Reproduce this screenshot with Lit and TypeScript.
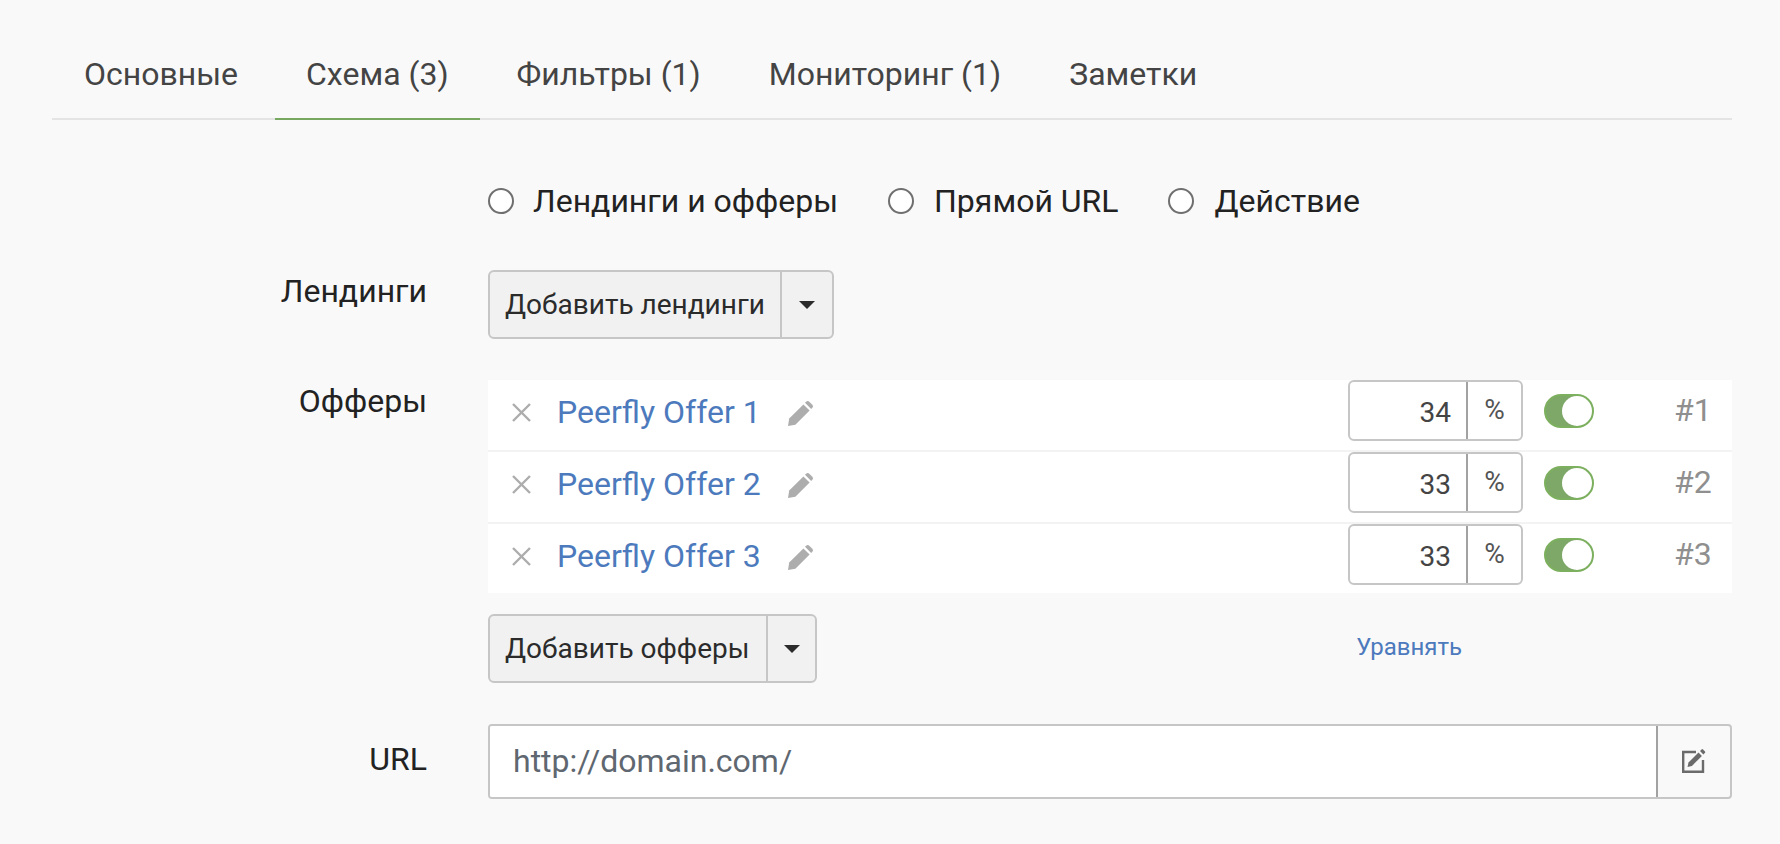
import { LitElement, html, css, svg } from "lit";
import { customElement } from "lit/decorators.js";

const pencil = svg`<path d="M1.2 17.6 15.4 3.4l6.2 6.2L7.4 23.8 0 25z"/><path d="M17 1.8l.9-.9a2.6 2.6 0 0 1 3.6 0l2.6 2.6a2.6 2.6 0 0 1 0 3.6l-.9.9z"/>`;

@customElement("app-root")
export class AppRoot extends LitElement {
  static styles = css`
    :host {
      display: block;
      box-sizing: border-box;
      width: 1780px;
      height: 844px;
      background: #f9f9f9;
      padding: 0 48px 0 52px;
      font-family: Roboto, "Liberation Sans", sans-serif;
      color: #222;
      overflow: hidden;
    }
    .tabs {
      display: flex;
      height: 120px;
      box-sizing: border-box;
      border-bottom: 2px solid #e4e4e4;
      gap: 4px;
    }
    .tab {
      padding: 58px 32px 0;
      height: 120px;
      box-sizing: border-box;
      line-height: 1;
      font-size: 32px;
      color: #444;
      border-bottom: 2px solid transparent;
    }
    .tab.active {
      margin: 0 1px;
      padding: 58px 31px 0;
      border-bottom-color: #76a95f;
    }
    .radios {
      display: flex;
      margin: 66px 0 0 436px;
      height: 30px;
      align-items: center;
      gap: 50px;
      font-size: 32px;
      color: #222;
    }
    .radio {
      display: flex;
      align-items: center;
      gap: 19px;
    }
    .radio + .radio { gap: 20px; }
    .dot {
      width: 26px;
      height: 26px;
      box-sizing: border-box;
      border: 2px solid #6f6f6f;
      border-radius: 50%;
      background: #fff;
    }
    .row {
      display: flex;
      align-items: flex-start;
    }
    .label {
      width: 375px;
      margin-right: 61px;
      text-align: right;
      font-size: 32px;
      line-height: 38px;
      color: #222;
      flex: none;
    }
    .row-land { margin-top: 54px; }
    .row-land .label { padding-top: 2px; }
    .row-off { margin-top: 41px; }
    .row-off .label { padding-top: 2px; }
    .row-url { margin-top: 41px; }
    .row-url .label { padding-top: 16px; }
    .body { flex: 1; min-width: 0; }
    .btn {
      display: inline-flex;
      height: 69px;
      box-sizing: border-box;
      border: 2px solid #c6c6c6;
      border-radius: 6px;
      background: #f1f1f1;
      font-size: 28px;
      color: #2b2b2b;
      align-items: stretch;
    }
    .btn .main {
      display: flex;
      align-items: center;
      padding: 0 15px;
      border-right: 2px solid #c6c6c6;
    }
    .btn .caret {
      display: flex;
      align-items: center;
      justify-content: center;
      width: 50px;
    }
    .foot .btn .main { padding-right: 17px; }
    .foot .btn .caret { width: 47px; }
    .btn .caret i {
      border-left: 8px solid transparent;
      border-right: 8px solid transparent;
      border-top: 8px solid #2b2b2b;
    }
    .offers { background: #fff; }
    .offer {
      display: flex;
      align-items: center;
      height: 72px;
      box-sizing: border-box;
      padding-bottom: 9px;
      border-bottom: 2px solid #f3f3f3;
    }
    .offer:last-child {
      height: 69px;
      padding-bottom: 8px;
      border-bottom: 0;
    }
    .x {
      width: 19px;
      height: 19px;
      margin: 4px 0 0 24px;
      flex: none;
      stroke: #adadad;
      stroke-width: 2.4;
      fill: none;
    }
    .name {
      margin-left: 26px;
      font-size: 32px;
      color: #4c7abd;
      white-space: nowrap;
    }
    .pen {
      width: 25px;
      height: 25px;
      fill: #adadad;
      flex: none;
      margin: 2px 0 0 2px;
    }
    .name-wrap {
      display: flex;
      align-items: center;
      gap: 25px;
      flex: 1;
      margin-top: 3px;
    }
    .pct {
      display: flex;
      width: 175px;
      height: 61px;
      box-sizing: border-box;
      border: 2px solid #c6c6c6;
      border-radius: 6px;
      flex: none;
    }
    .pct .v {
      width: 118px;
      flex: none;
      box-sizing: border-box;
      padding: 3px 15px 0 0;
      display: flex;
      align-items: center;
      justify-content: flex-end;
      font-size: 28px;
      color: #444;
      border-right: 2px solid #a2a2a2;
    }
    .pct .u {
      flex: 1;
      display: flex;
      align-items: center;
      justify-content: center;
      font-size: 28px;
      color: #555;
      padding-bottom: 3px;
    }
    .toggle {
      width: 50px;
      height: 34px;
      box-sizing: border-box;
      margin-left: 21px;
      border: 2px solid #7cb05f;
      border-radius: 17px;
      background: #7da868;
      display: flex;
      justify-content: flex-end;
      flex: none;
    }
    .toggle i {
      width: 30px;
      height: 30px;
      border-radius: 50%;
      background: #fff;
    }
    .num {
      margin-left: 80px;
      font-size: 32px;
      color: #8f8f8f;
      width: 58px;
      flex: none;
      padding-bottom: 2px;
    }
    .foot {
      display: flex;
      align-items: center;
      margin-top: 21px;
    }
    .equal {
      margin-left: auto;
      margin-right: 270px;
      font-size: 24px;
      color: #4c7abd;
      padding-bottom: 3px;
    }
    .url {
      display: flex;
      height: 75px;
      box-sizing: border-box;
      border: 2px solid #c6c6c6;
      border-radius: 4px;
      overflow: hidden;
    }
    .url .text {
      flex: 1;
      background: #fff;
      display: flex;
      align-items: center;
      padding: 0 0 2px 23px;
      font-size: 32px;
      color: #5f6770;
      border-right: 2px solid #a2a2a2;
    }
    .url .act {
      width: 72px;
      flex: none;
      display: flex;
      align-items: center;
      justify-content: center;
    }
    .url svg {
      width: 25px;
      height: 25px;
      margin: 0 0 2px 0;
    }
  `;

  render() {
    const offers = [
      ["Peerfly Offer 1", "34", "#1"],
      ["Peerfly Offer 2", "33", "#2"],
      ["Peerfly Offer 3", "33", "#3"],
    ];
    return html`
      <nav class="tabs">
        <div class="tab">Основные</div>
        <div class="tab active">Схема (3)</div>
        <div class="tab">Фильтры (1)</div>
        <div class="tab">Мониторинг (1)</div>
        <div class="tab">Заметки</div>
      </nav>
      <div class="radios">
        <div class="radio"><span class="dot"></span>Лендинги и офферы</div>
        <div class="radio"><span class="dot"></span>Прямой URL</div>
        <div class="radio"><span class="dot"></span>Действие</div>
      </div>
      <div class="row row-land">
        <div class="label">Лендинги</div>
        <div class="body">
          <div class="btn"><span class="main">Добавить лендинги</span><span class="caret"><i></i></span></div>
        </div>
      </div>
      <div class="row row-off">
        <div class="label">Офферы</div>
        <div class="body">
          <div class="offers">
            ${offers.map(
              ([n, v, k]) => html`
                <div class="offer">
                  <svg class="x" viewBox="0 0 19 19"><path d="M1 1l17 17M18 1L1 18" /></svg>
                  <div class="name-wrap">
                    <span class="name">${n}</span>
                    <svg class="pen" viewBox="0 0 25 25">${pencil}</svg>
                  </div>
                  <div class="pct"><span class="v">${v}</span><span class="u">%</span></div>
                  <div class="toggle"><i></i></div>
                  <div class="num">${k}</div>
                </div>
              `
            )}
          </div>
          <div class="foot">
            <div class="btn"><span class="main">Добавить офферы</span><span class="caret"><i></i></span></div>
            <a class="equal">Уравнять</a>
          </div>
        </div>
      </div>
      <div class="row row-url">
        <div class="label">URL</div>
        <div class="body">
          <div class="url">
            <div class="text">http://domain.com/</div>
            <div class="act">
              <svg viewBox="0 0 25 25">
                <path d="M14 4H1.2v19.8H21V12" fill="none" stroke="#6b6b6b" stroke-width="2.4" />
                <path d="M6.5 14.5 16.5 4.5l3.4 3.4-10 10-4.4 1z" fill="#6b6b6b" />
                <path d="M18 3l1.6-1.6a1 1 0 0 1 1.4 0l2 2a1 1 0 0 1 0 1.4L21.4 6.4z" fill="#6b6b6b" />
              </svg>
            </div>
          </div>
        </div>
      </div>
    `;
  }
}
